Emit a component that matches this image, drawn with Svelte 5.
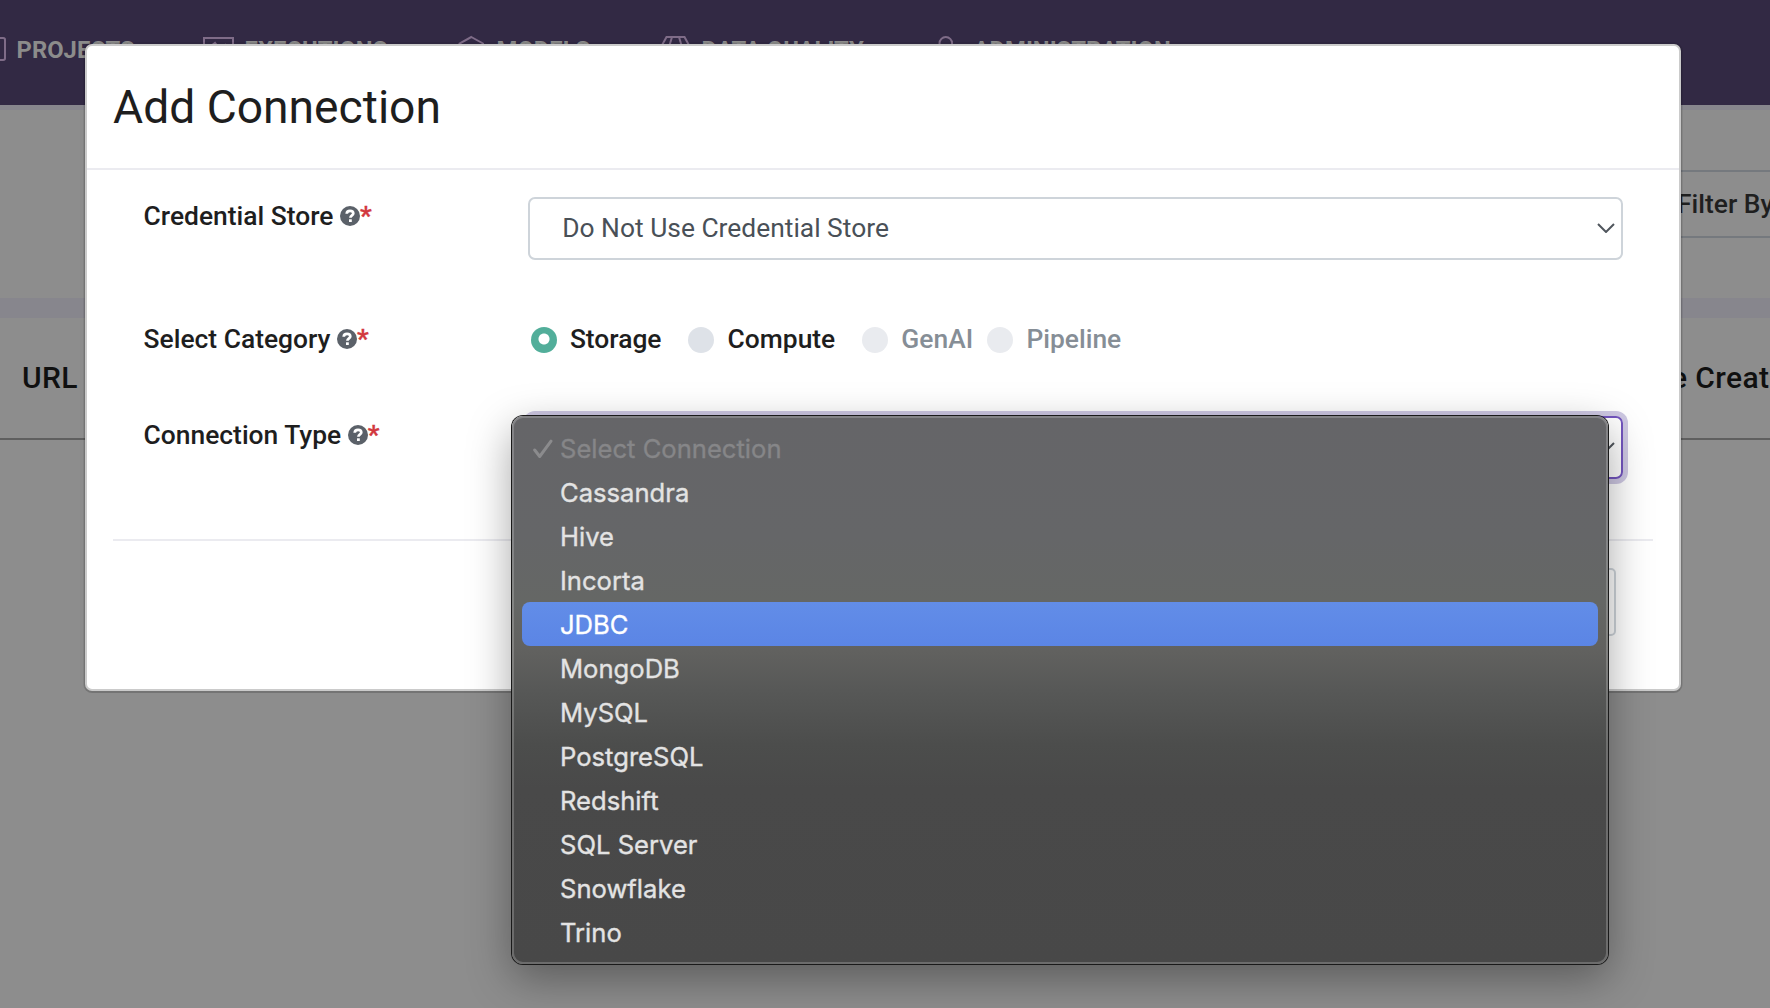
<script>
  const nav = [
    { label: 'PROJECTS', icon: 'projects' },
    { label: 'EXECUTIONS', icon: 'executions' },
    { label: 'MODELS', icon: 'models' },
    { label: 'DATA QUALITY', icon: 'quality' },
    { label: 'ADMINISTRATION', icon: 'admin' },
  ];
  const categories = [
    { label: 'Storage', checked: true },
    { label: 'Compute' },
    { label: 'GenAI', disabled: true },
    { label: 'Pipeline', disabled: true },
  ];
  const options = [
    'Select Connection', 'Cassandra', 'Hive', 'Incorta', 'JDBC', 'MongoDB',
    'MySQL', 'PostgreSQL', 'Redshift', 'SQL Server', 'Snowflake', 'Trino',
  ];
</script>

{#snippet label(text)}
  <div class="label">
    <span>{text}</span>
    <svg class="help" viewBox="0 0 20 20" width="20" height="20">
      <circle cx="10" cy="10" r="10" />
      <path d="M6.7 7.7C6.8 5.7 8.1 4.8 10 4.8C12 4.8 13.3 5.9 13.3 7.5C13.3 9.5 10.4 9.4 10.4 11.8" />
      <rect x="9" y="13.3" width="2.8" height="2.7" />
    </svg><span class="req">*</span>
  </div>
{/snippet}

{#snippet chevron()}
  <svg class="chev" viewBox="0 0 18 10" width="18" height="10"><path d="M1 1L9 9L17 1" /></svg>
{/snippet}

<div class="page">
  <nav class="nav">
    {#each nav as item}
      <div class="nav-item">
        {#if item.icon === 'projects'}
          <svg width="6" height="26" viewBox="0 0 6 26"><path d="M0 2H3.200Q5 2 5 3.700V22.300Q5 24 3.200 24H0" /></svg>
        {:else if item.icon === 'executions'}
          <svg width="31" height="26" viewBox="0 0 31 26"><rect x="1" y="2" width="29" height="22" /><path d="M8 18V10L12 7L16 12L22 9V18" /></svg>
        {:else if item.icon === 'models'}
          <svg width="29" height="28" viewBox="0 0 29 28"><path d="M14.3 2L26 8.5V20L14.3 27L2.500 20V8.500Z" /></svg>
        {:else if item.icon === 'quality'}
          <svg width="31" height="28" viewBox="0 0 31 28"><path d="M6.500 2H24.500L30 12L15.500 27L1 12ZM12 2L9 12L15.500 27L22 12L19 2M1 12H30" /></svg>
        {:else}
          <svg width="30" height="28" viewBox="0 0 30 28"><circle cx="12.800" cy="8.300" r="6.300" /><path d="M2 27C2 13.500 23.600 13.500 23.600 27" /></svg>
        {/if}
        <span>{item.label}</span>
      </div>
    {/each}
  </nav>
  <div class="strip"></div>
  <div class="toolbar"><div class="filter">Filter By</div></div>
  <div class="band"></div>
  <div class="thead"><span>URL</span><span>Date Created</span></div>
</div>

<div class="modal">
  <header><h1>Add Connection</h1></header>
  <div class="form">
    <div class="row store">
      {@render label('Credential Store')}
      <div class="select"><span>Do Not Use Credential Store</span>{@render chevron()}</div>
    </div>
    <div class="row category">
      {@render label('Select Category')}
      <div class="radios">
        {#each categories as c}
          <div class="radio" class:disabled={c.disabled}>
            <i class:checked={c.checked}></i><span>{c.label}</span>
          </div>
        {/each}
      </div>
    </div>
    <div class="row">
      {@render label('Connection Type')}
      <div class="select focused"><span></span>{@render chevron()}</div>
    </div>
  </div>
  <footer><div class="button"></div></footer>
</div>

<div class="menu">
  {#each options as option, i}
    <div class="option" class:placeholder={i === 0} class:active={option === 'JDBC'}>
      <span class="mark">
        {#if i === 0}
          <svg width="20" height="20" viewBox="0 0 20 20"><path d="M1.700 11L6.700 17.500L18 2.200" /></svg>
        {/if}
      </span>
      <span>{option}</span>
    </div>
  {/each}
</div>

<style>
  :global(body) {
    margin: 0;
    overflow: hidden;
    background: #8d8d8d;
    font-family: Roboto, sans-serif;
  }
  .page {
    height: 1008px;
    overflow: hidden;
    white-space: nowrap;
  }
  .nav {
    box-sizing: border-box;
    height: 105px;
    padding-bottom: 5px;
    background: #322944;
    display: grid;
    grid-template-columns: 203px 254px 203px 273px auto;
    align-items: center;
  }
  .nav-item {
    display: flex;
    align-items: center;
    gap: 10.6px;
    font-size: 23.8px;
    font-weight: 700;
    line-height: 30px;
    color: #8c8c8b;
  }
  .nav-item svg {
    flex: none;
    margin-top: -2px;
    fill: none;
    stroke: #7f6c88;
    stroke-width: 2;
  }
  .strip { height: 5px; background: #87868d; }
  .toolbar {
    height: 188px;
    box-sizing: border-box;
    padding-top: 60px;
    display: flex;
    justify-content: flex-end;
  }
  .filter {
    box-sizing: border-box;
    width: 140px;
    height: 68px;
    padding-left: 45px;
    border: 2px solid #75797e;
    border-right: 0;
    font-size: 26.4px;
    font-weight: 500;
    line-height: 64px;
    color: #1f1f1f;
  }
  .band { height: 20px; background: #87868d; }
  .thead {
    height: 120px;
    border-bottom: 2px solid #5f5f5f;
    display: grid;
    grid-template-columns: 1602px auto;
    padding-left: 22px;
    font-size: 30px;
    font-weight: 500;
    letter-spacing: 0.4px;
    line-height: 120px;
    color: #101010;
  }

  .modal {
    position: absolute;
    left: 85px;
    top: 44px;
    box-sizing: border-box;
    width: 1596px;
    height: 647px;
    border: 2px solid #cbcbcb;
    border-radius: 7px;
    background: #fff;
    box-shadow: 0 1px 0 1px rgba(0, 0, 0, 0.11), 0 0 0 2px rgba(0, 0, 0, 0.07);
    color: #1e1e1e;
  }
  header {
    height: 122px;
    border-bottom: 2px solid #ebebf0;
    padding-left: 26px;
  }
  h1 {
    margin: 0;
    font-size: 46.2px;
    font-weight: 400;
    line-height: 123px;
  }
  .form {
    margin: 0 26px;
    padding: 27px 30px 60px;
    border-bottom: 2px solid #ebebf0;
  }
  .row {
    display: grid;
    grid-template-columns: 385px 1095px;
    align-items: start;
  }
  .row.store { margin-bottom: 60px; }
  .row.category { margin-bottom: 58px; }
  .label {
    display: flex;
    align-items: center;
    padding-left: 0.6px;
    font-size: 26.4px;
    font-weight: 500;
    line-height: 38px;
    height: 38px;
  }
  .help { margin-left: 6.6px; }
  .help circle { fill: #5b6169; }
  .help rect { fill: #fff; }
  .help path { fill: none; stroke: #fff; stroke-width: 2.7; }
  .req { color: #d2383e; -webkit-text-stroke: 0.4px #d2383e; }
  .select {
    box-sizing: border-box;
    height: 63px;
    border: 2px solid #ced4da;
    border-radius: 7px;
    display: flex;
    align-items: center;
    justify-content: space-between;
    padding: 0 6px 0 32.2px;
    font-size: 26.4px;
    line-height: 59px;
    color: #495057;
  }
  .select.focused {
    border-color: #7355bf;
    box-shadow: 0 0 0 5px #cec8e3;
  }
  .chev { fill: none; stroke: #50565d; stroke-width: 2; margin-top: -1px; }
  .radios {
    display: flex;
    height: 38px;
    padding-left: 2.6px;
    font-size: 26.4px;
    font-weight: 500;
    line-height: 38px;
  }
  .radio { display: flex; align-items: center; gap: 13.3px; }
  .radio + .radio { margin-left: 26.8px; }
  .radio.disabled + .disabled { margin-left: 14px; }
  .radio i {
    width: 26px;
    height: 26px;
    margin-top: 2px;
    border-radius: 50%;
    background: #dee2e8;
  }
  .radio i.checked {
    background: radial-gradient(circle at 13px 12px, #fff 5px, #52ae9a 6px);
  }
  .radio.disabled { color: #868e96; }
  .radio.disabled i { background: #e9ebef; }
  footer {
    display: flex;
    justify-content: flex-end;
    padding: 27px 63px 0;
  }
  .button {
    box-sizing: border-box;
    width: 130px;
    height: 68px;
    border: 2px solid #ced4da;
    border-radius: 5px;
  }

  .menu {
    position: absolute;
    left: 512px;
    top: 416px;
    box-sizing: border-box;
    width: 1096px;
    height: 548px;
    padding: 8px;
    border: 2px solid rgba(255, 255, 255, 0.2);
    border-radius: 11px;
    background: linear-gradient(#656568 0%, #656668 22%, #656765 34%, #61615f 43%, #575857 50%, #4c4d4c 60%, #494949 68%, #484848 100%) border-box;
    box-shadow: 0 0 0 1px #1a1a1a, 0 14px 44px rgba(0, 0, 0, 0.36);
    font-family: Inter, sans-serif;
    font-size: 25.6px;
    line-height: 46px;
    color: #e3e3e3;
    -webkit-text-stroke: 0.35px currentColor;
  }
  .option {
    display: flex;
    height: 44px;
    border-radius: 8px;
  }
  .mark { width: 38px; display: flex; align-items: center; }
  .mark svg { margin: 1px 0 0 10.5px; fill: none; stroke: #8b8b8d; stroke-width: 3; stroke-linecap: round; stroke-linejoin: round; }
  .placeholder { color: #868688; }
  .active { background: linear-gradient(#628de8, #5b85e5); color: #fff; }
</style>
